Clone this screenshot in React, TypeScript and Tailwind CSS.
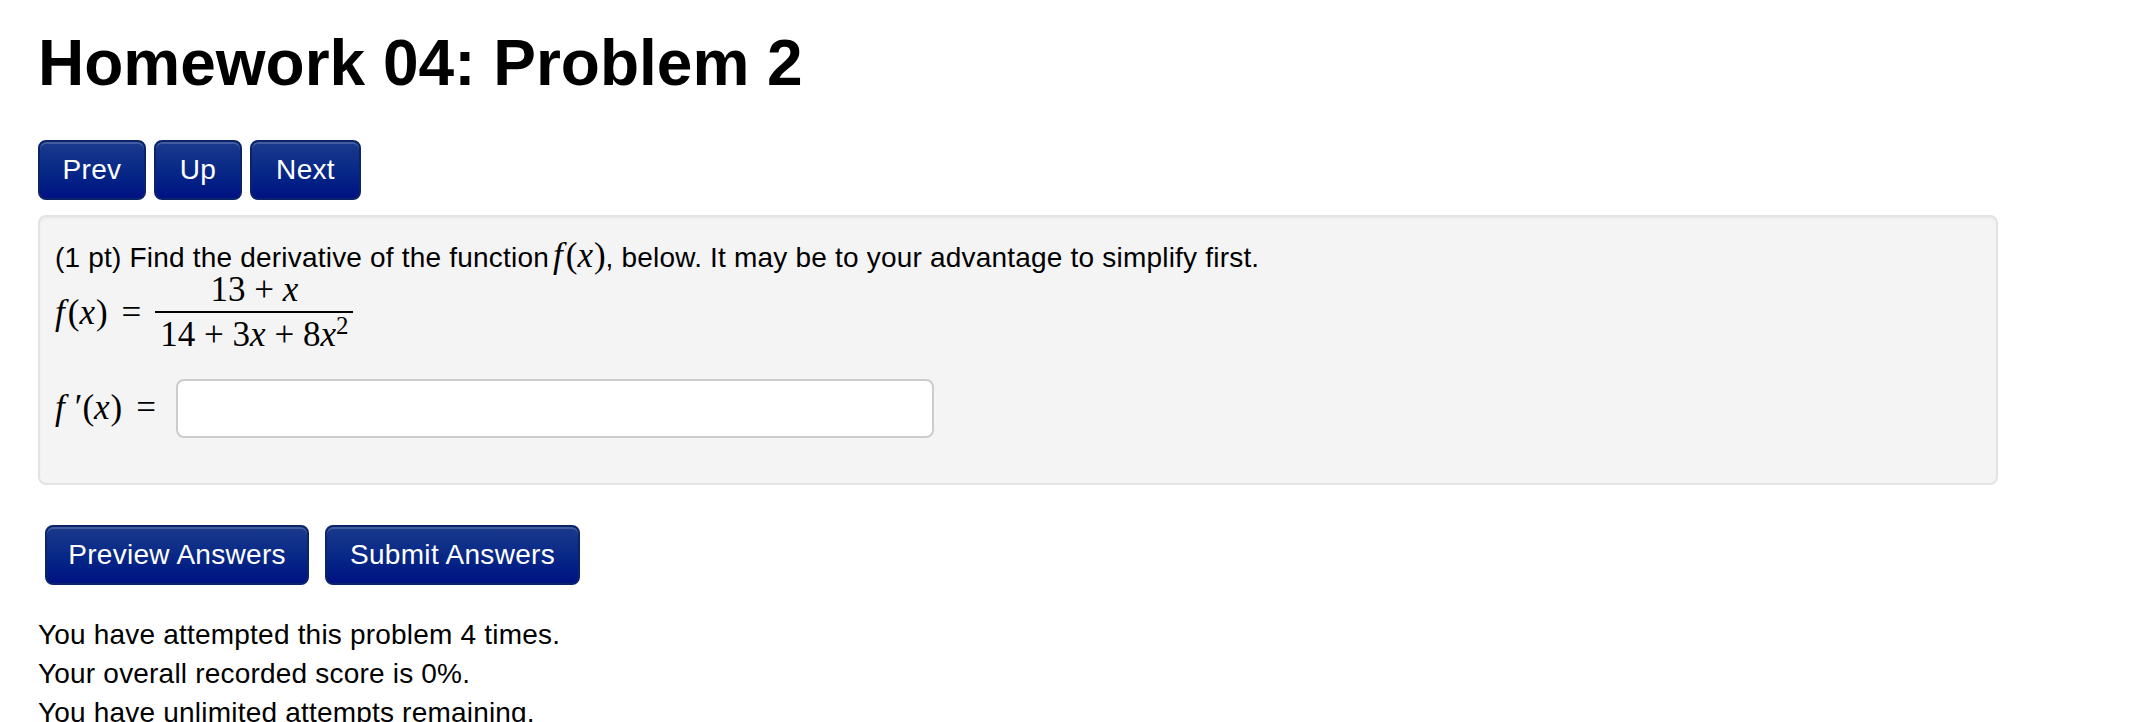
import React from "react";

const btn =
  "rounded-[8px] border-2 border-[#0b2368] bg-linear-to-b from-[#1a3a8c] to-[#001082] py-[8px] text-center text-[28px] leading-[40px] tracking-[0.3px] text-white shadow-[inset_0_2px_0_rgba(255,255,255,0.18)]";

const NavButton = ({ label, width }: { label: string; width: string }) => (
  <button type="button" className={`${btn} ${width}`}>
    {label}
  </button>
);

// italic math letter, with a little room for the slanted f
const V = ({ children, extra = "" }: { children: React.ReactNode; extra?: string }) => (
  <span className={`italic ${extra}`}>{children}</span>
);

const serif = "font-['Liberation_Serif','Times_New_Roman',serif]";

export default function App() {
  return (
    <div className="min-h-screen bg-white pl-[38px] font-['Liberation_Sans',Arial,sans-serif] text-black">
      <h1 className="pt-[31px] text-[64px] font-bold leading-[64px]">
        Homework 04: Problem 2
      </h1>

      <div className="mt-[45px] flex gap-[8px]">
        <NavButton label="Prev" width="w-[108px]" />
        <NavButton label="Up" width="w-[88px]" />
        <NavButton label="Next" width="w-[111px]" />
      </div>

      <div className="mt-[15px] h-[270px] w-[1960px] rounded-[8px] border-2 border-[#e3e3e3] bg-[#f4f4f4] px-[15px] pt-[23px] shadow-[inset_0_2px_2px_rgba(0,0,0,0.04)]">
        <p className="text-[28px] leading-[32px] tracking-[0.2px]">
          (1 pt) Find the derivative of the function
          <span className={`${serif} ml-[4px] text-[35px] tracking-normal`}>
            <V extra="mr-[3px]">f</V>(<V extra="mr-[1px]">x</V>)
          </span>
          , below. It may be to your advantage to simplify first.
        </p>

        {/* f(x) = (13 + x) / (14 + 3x + 8x^2) */}
        <div className={`flex items-center ${serif} text-[35px]`}>
          <span className="whitespace-pre">
            <V extra="mr-[3px]">f</V>(<V extra="mr-[1px]">x</V>)
          </span>
          <span className="mx-[14px]">=</span>
          <div className="inline-flex flex-col items-stretch">
            <span className="px-[5px] pb-[5px] text-center leading-[32px]">
              13 + <V>x</V>
            </span>
            <span className="h-[2px] bg-black" />
            <span className="px-[5px] pt-[5px] text-center leading-[34px]">
              14 + 3<V>x</V> + 8<V>x</V>
              <sup className="text-[25px]">2</sup>
            </span>
          </div>
        </div>

        <div className="mt-[27px] flex items-center">
          <span className={`${serif} text-[35px] whitespace-pre`}>
            <V extra="mr-[10px]">f</V>′(<V extra="mr-[1px]">x</V>)
          </span>
          <span className={`${serif} ml-[14px] mr-[20px] text-[35px]`}>=</span>
          <input
            type="text"
            className="h-[59px] w-[758px] rounded-[8px] border-2 border-[#cccccc] bg-white px-[12px] text-[28px] outline-none"
          />
        </div>
      </div>

      <div className="ml-[7px] mt-[40px] flex gap-[16px]">
        <NavButton label="Preview Answers" width="w-[264px]" />
        <NavButton label="Submit Answers" width="w-[255px]" />
      </div>

      <div className="mt-[30px] text-[28px] leading-[39px] tracking-[0.2px]">
        <p>You have attempted this problem 4 times.</p>
        <p>Your overall recorded score is 0%.</p>
        <p>You have unlimited attempts remaining.</p>
      </div>
    </div>
  );
}
